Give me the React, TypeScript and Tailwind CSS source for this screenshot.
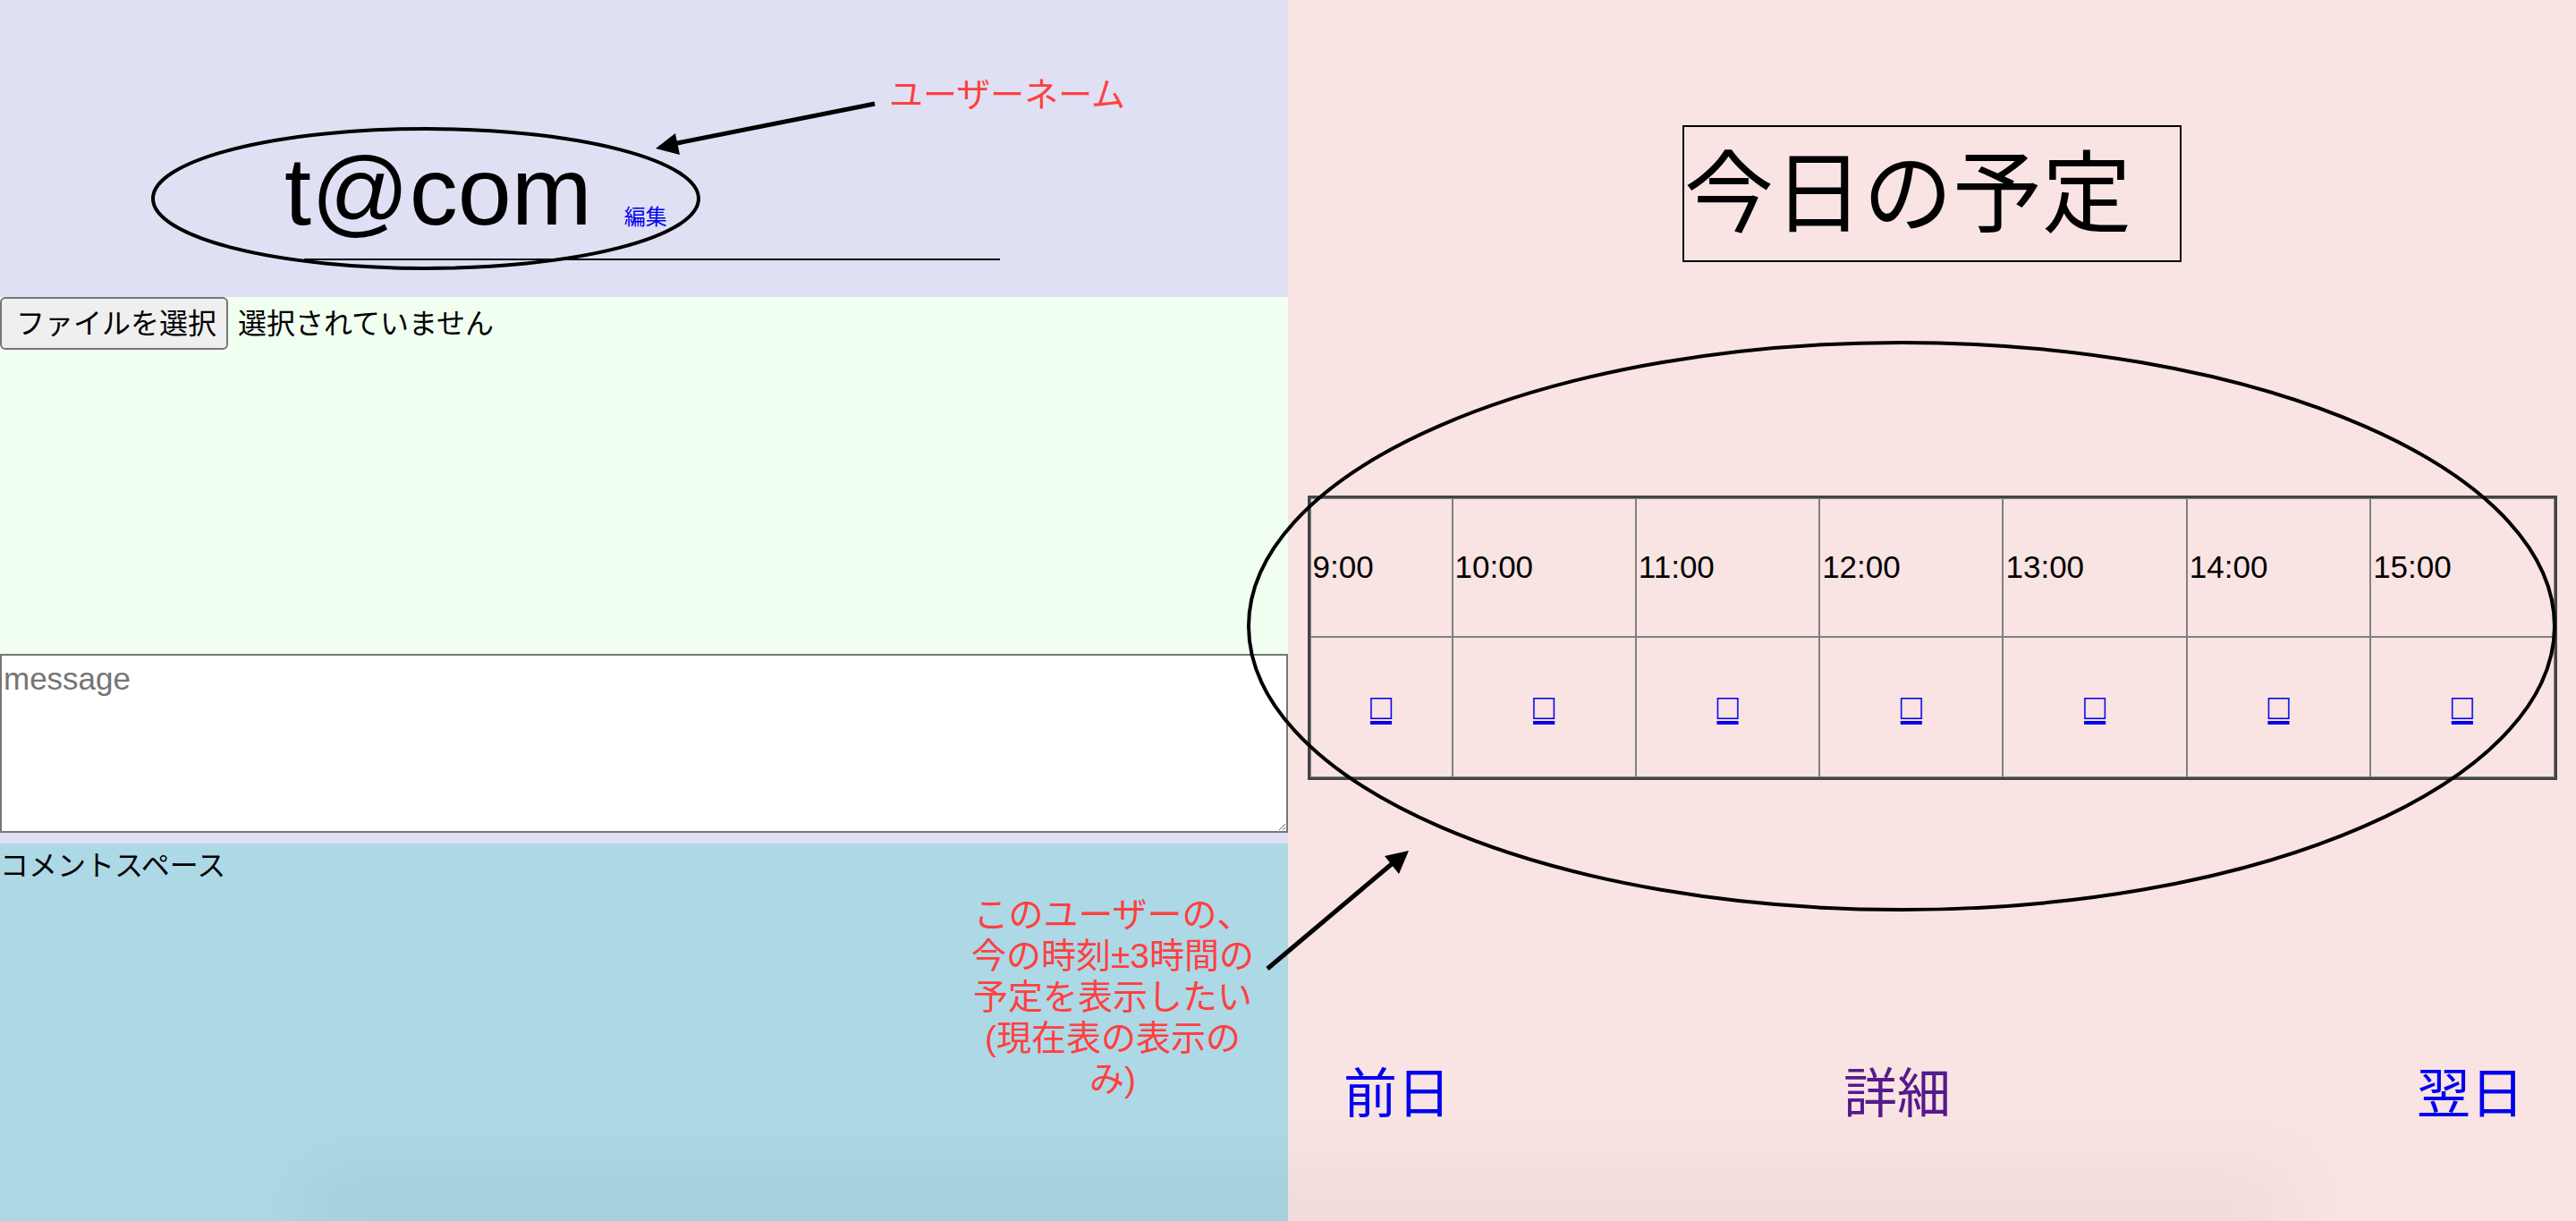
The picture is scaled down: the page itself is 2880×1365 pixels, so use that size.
import React from "react";

const jp = "font-['Liberation_Sans','Noto_Sans_CJK_JP',sans-serif]";

export default function App() {
  const times = ["9:00", "10:00", "11:00", "12:00", "13:00", "14:00", "15:00"];
  return (
    <div className={`relative flex w-[2880px] h-[1365px] overflow-hidden text-black ${jp}`}>
      {/* Left column */}
      <div className="flex flex-col w-[1440px] h-full bg-[#e0e0f5]">
        <div className="h-[332px] flex flex-col">
          <div className="flex items-baseline pl-[318px] pt-[160px]">
            <span className="text-[108px] leading-none font-['Liberation_Sans',sans-serif]">t@com</span>
            <a className="ml-[36px] text-[24px] leading-none text-[#0000ee]">編集</a>
          </div>
          <div className="ml-[340px] mt-[21px] w-[778px] h-[2px] bg-black" />
        </div>
        <div className="h-[399px] bg-[#f0fff0]">
          <div className="flex items-center">
            <button className="h-[59px] w-[255px] border-2 border-[#767676] rounded-[6px] bg-[#efefef] text-[32px] leading-none text-left pl-[16px]">
              ファイルを選択
            </button>
            <span className="ml-[11px] text-[32px] leading-none">選択されていません</span>
          </div>
        </div>
        <textarea
          placeholder="message"
          className="block w-[1440px] h-[200px] border-2 border-[#767676] bg-white px-[2px] pt-[6px] text-[35px] leading-[1.15] font-['Liberation_Sans',sans-serif] placeholder:text-[#757575] outline-none"
        />
        <div className="h-[12px]" />
        <div className="flex-1 bg-[#add8e6]">
          <div className="pt-[5px] text-[32px] leading-[40px]">コメントスペース</div>
        </div>
      </div>

      {/* Right column */}
      <div className="flex flex-col w-[1440px] h-full bg-[#f9e3e3] pt-[140px]">
        <div className="mx-auto w-[558px] h-[153px] border-2 border-black flex items-center">
          <span className="text-[100px] leading-none">今日の予定</span>
        </div>
        <table className="mx-auto mt-[261px] w-[1397px] table-fixed border-separate border-spacing-0 border-[3px] border-[#444444]">
          <colgroup>
            <col className="w-[159px]" />
            <col />
            <col />
            <col />
            <col />
            <col />
            <col />
          </colgroup>
          <tbody>
            <tr className="h-[155px]">
              {times.map((t) => (
                <td key={t} className="border border-[#808080] px-[2px] align-middle text-left text-[35px] font-['Liberation_Sans',sans-serif]">
                  {t}
                </td>
              ))}
            </tr>
            <tr className="h-[157px]">
              {times.map((t) => (
                <td key={t} className="border border-[#808080] align-middle text-center">
                  <a className="text-[40px] leading-none text-[#0000ee] underline">□</a>
                </td>
              ))}
            </tr>
          </tbody>
        </table>
        <div className="flex mt-[322px] text-[60px] leading-none">
          <a className="ml-[62px] text-[#0000ee]">前日</a>
          <a className="ml-[439px] text-[#551a8b]">詳細</a>
          <a className="ml-[521px] text-[#0000ee]">翌日</a>
        </div>
      </div>

      {/* Annotations */}
      <svg className="absolute inset-0 pointer-events-none" width="2880" height="1365" viewBox="0 0 2880 1365">
        <ellipse cx="476" cy="222" rx="305" ry="78" fill="none" stroke="black" strokeWidth="4" />
        <ellipse cx="2126" cy="700" rx="730" ry="317" fill="none" stroke="black" strokeWidth="4" />
        <line x1="978" y1="116" x2="752" y2="161" stroke="black" strokeWidth="5" />
        <polygon points="733,166 755,149 760,173" fill="black" />
        <line x1="1417" y1="1083" x2="1557" y2="965" stroke="black" strokeWidth="5" />
        <polygon points="1575,951 1548,957 1564,977" fill="black" />
      </svg>
      <div className="absolute left-[994px] top-[87px] text-[38px] leading-none text-[#ff4040] whitespace-nowrap">
        ユーザーネーム
      </div>
      <div className="absolute left-[1044px] top-[1000px] w-[400px] text-center text-[39px] leading-[46px] text-[#ff4040]">
        このユーザーの、
        <br />
        今の時刻±3時間の
        <br />
        予定を表示したい
        <br />
        (現在表の表示の
        <br />
        み)
      </div>
      <div className="absolute -bottom-[20px] left-[340px] w-[2220px] h-[100px] bg-linear-to-t from-black/[0.07] to-transparent blur-2xl pointer-events-none" />
    </div>
  );
}
